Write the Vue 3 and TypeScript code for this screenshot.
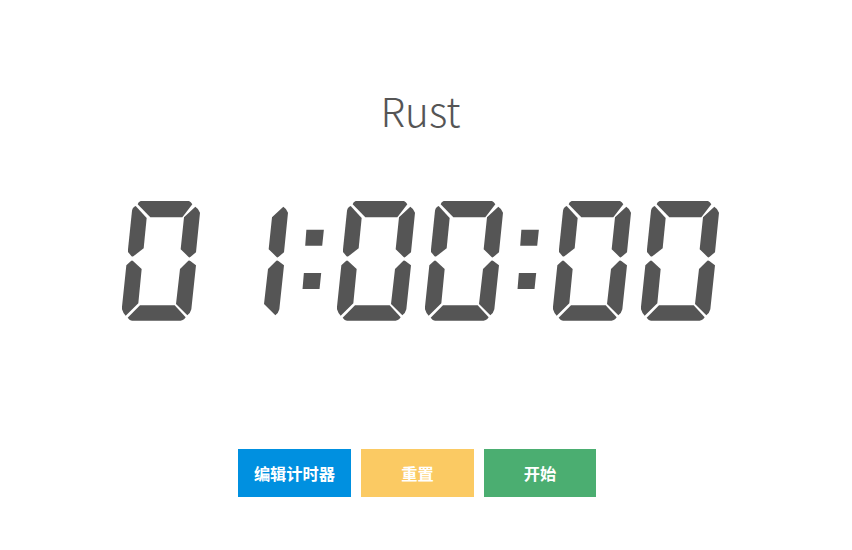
<script setup lang="ts">
import { computed, ref } from 'vue'

type Segment = 'a' | 'b' | 'c' | 'd' | 'e' | 'f' | 'g'

const title = ref('Rust')
const duration = 3600
const remaining = ref(duration)
const running = ref(false)
let timer = 0

const paths: Record<Segment, string> = {
  a: 'M92 33H237Q243 35 247 43L217 82H121L83 43Q85 35 92 33Z',
  b: 'M256 50Q266 56 270 68L258 187L241 201Q238 204 235 200L212 178L222 82Z',
  c: 'M235 212Q238 210 241 213L258 226L244 358Q241 370 232 376L198 342L210 237Z',
  d: 'M90 346H194L227 382L223 387Q219 391 212 392H66Q58 391 53 383Z',
  e: 'M63 213Q66 210 69 213L95 237L85 340L47 377Q39 369 36 358V350L49 226Z',
  f: 'M77 48L110 84L101 175L70 199Q67 201 64 198L54 186V178L66 62Q68 51 77 48Z',
  g: 'M80 207L106 184H200L225 207L198 230H104Z',
}

const digitSegments: Record<string, string> = {
  '0': 'abcdef', '1': 'bc', '2': 'abged', '3': 'abgcd', '4': 'fgbc',
  '5': 'afgcd', '6': 'afgecd', '7': 'abc', '8': 'abcdefg', '9': 'abcdfg',
}

const time = computed(() => {
  const s = remaining.value
  return [Math.floor(s / 3600), Math.floor(s / 60) % 60, s % 60]
    .map((n) => String(n).padStart(2, '0'))
    .join(':')
})

const segmentsOf = (ch: string) => [...digitSegments[ch]].map((s) => paths[s as Segment])

function stop() {
  window.clearInterval(timer)
  running.value = false
}
function toggle() {
  if (running.value) return stop()
  running.value = true
  timer = window.setInterval(() => {
    if (remaining.value > 0) remaining.value--
    else stop()
  }, 1000)
}
function reset() {
  stop()
  remaining.value = duration
}
</script>

<template>
  <main class="timer">
    <h1 class="title">{{ title }}</h1>
    <div class="clock" role="timer">
      <template v-for="(ch, i) in time" :key="i">
        <svg v-if="ch === ':'" class="colon" viewBox="131.4 0 117.75 420">
          <path d="M168.500 119H221L216 167H165Z M161 249H213L208 297H157Z" />
        </svg>
        <svg v-else class="digit" viewBox="24 0 264 420">
          <path v-for="d in segmentsOf(ch)" :key="d" :d="d" />
        </svg>
      </template>
    </div>
    <div class="actions">
      <button class="btn edit" type="button">编辑计时器</button>
      <button class="btn reset" type="button" @click="reset">重置</button>
      <button class="btn start" type="button" @click="toggle">{{ running ? '暂停' : '开始' }}</button>
    </div>
  </main>
</template>

<style>
body {
  background: #fff;
}
</style>

<style scoped>
.timer {
  box-sizing: border-box;
  width: 834px;
  height: 550px;
  padding-top: 78px;
  display: flex;
  flex-direction: column;
  align-items: center;
}
.title {
  margin: 0;
  padding-left: 7px;
  height: 112px;
  line-height: 64px;
  color: #555;
  font-family: "Noto Sans CJK SC", "Noto Sans", sans-serif;
  font-size: 40.4px;
  font-weight: 300;
}
.clock {
  display: flex;
  height: 140px;
  padding-left: 8.5px;
  fill: #555;
}
.digit {
  width: 88px;
  height: 140px;
}
.colon {
  width: 39.25px;
  height: 140px;
}
.actions {
  display: flex;
  gap: 10px;
  margin-top: 119px;
}
.btn {
  width: 113px;
  height: 48px;
  padding: 0;
  border: 0;
  color: #fff;
  font-family: "Noto Sans CJK SC", sans-serif;
  font-size: 16.25px;
  font-weight: 700;
  line-height: 48px;
  cursor: pointer;
}
.actions .btn:last-child {
  width: 112px;
}
.edit {
  background: #0090e0;
}
.reset {
  background: #fbca63;
}
.start {
  background: #4bae71;
}
</style>
